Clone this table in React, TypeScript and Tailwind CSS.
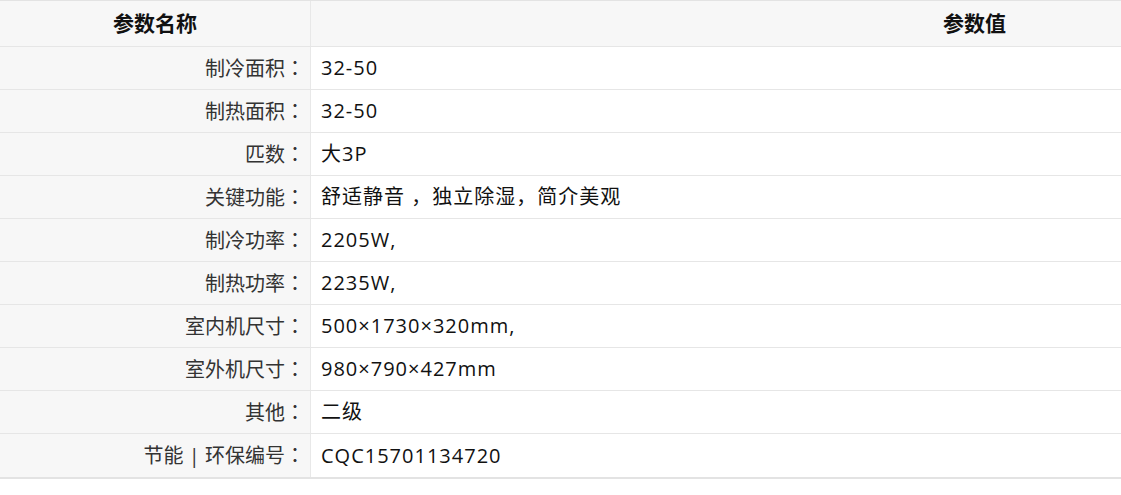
import React from 'react';

const rows: [string, string][] = [
  ['制冷面积', '32-50'],
  ['制热面积', '32-50'],
  ['匹数', '大3P'],
  ['关键功能', '舒适静音 ，独立除湿，简介美观'],
  ['制冷功率', '2205W,'],
  ['制热功率', '2235W,'],
  ['室内机尺寸', '500×1730×320mm,'],
  ['室外机尺寸', '980×790×427mm'],
  ['其他', '二级'],
  ['节能 | 环保编号', 'CQC15701134720'],
];

const App = () => {
  return (
    <div
      className="w-[1121px] h-[495px] bg-white overflow-hidden [text-spacing-trim:space-all]"
      style={{ fontFamily: '"Open Sans", "Noto Sans CJK SC", sans-serif' }}
    >
      <div className="border-t border-[#e3e3e3] border-b-2 border-b-[#e3e3e3]">
        {/* header */}
        <div className="flex h-[46px] bg-[#f7f7f7] border-b border-[#e6e6e6]">
          <div className="w-[311px] shrink-0 border-r border-[#e8e8e8] flex items-center justify-center">
            <span className="text-[21px] font-bold text-[#111]">参数名称</span>
          </div>
          <div className="flex-1 flex items-center pl-[632px]">
            <span className="text-[21px] font-bold text-[#111]">参数值</span>
          </div>
        </div>
        {rows.map(([label, value], i) => (
          <div
            key={label}
            className={`flex h-[43px] ${i < rows.length - 1 ? 'border-b border-[#e6e6e6]' : ''}`}
          >
            <div className="w-[311px] shrink-0 bg-[#f7f7f7] border-r border-[#e8e8e8] flex items-center justify-end pr-[5px]">
              <span className="text-[20px] text-[#333]">
                {label}
                <span style={{ fontFamily: '"Noto Sans CJK TC", sans-serif' }}>：</span>
              </span>
            </div>
            <div className="flex-1 flex items-center pl-[10px]">
              <span className="text-[20px] tracking-[1px] text-[#111]">{value}</span>
            </div>
          </div>
        ))}
      </div>
    </div>
  );
};

export default App;
